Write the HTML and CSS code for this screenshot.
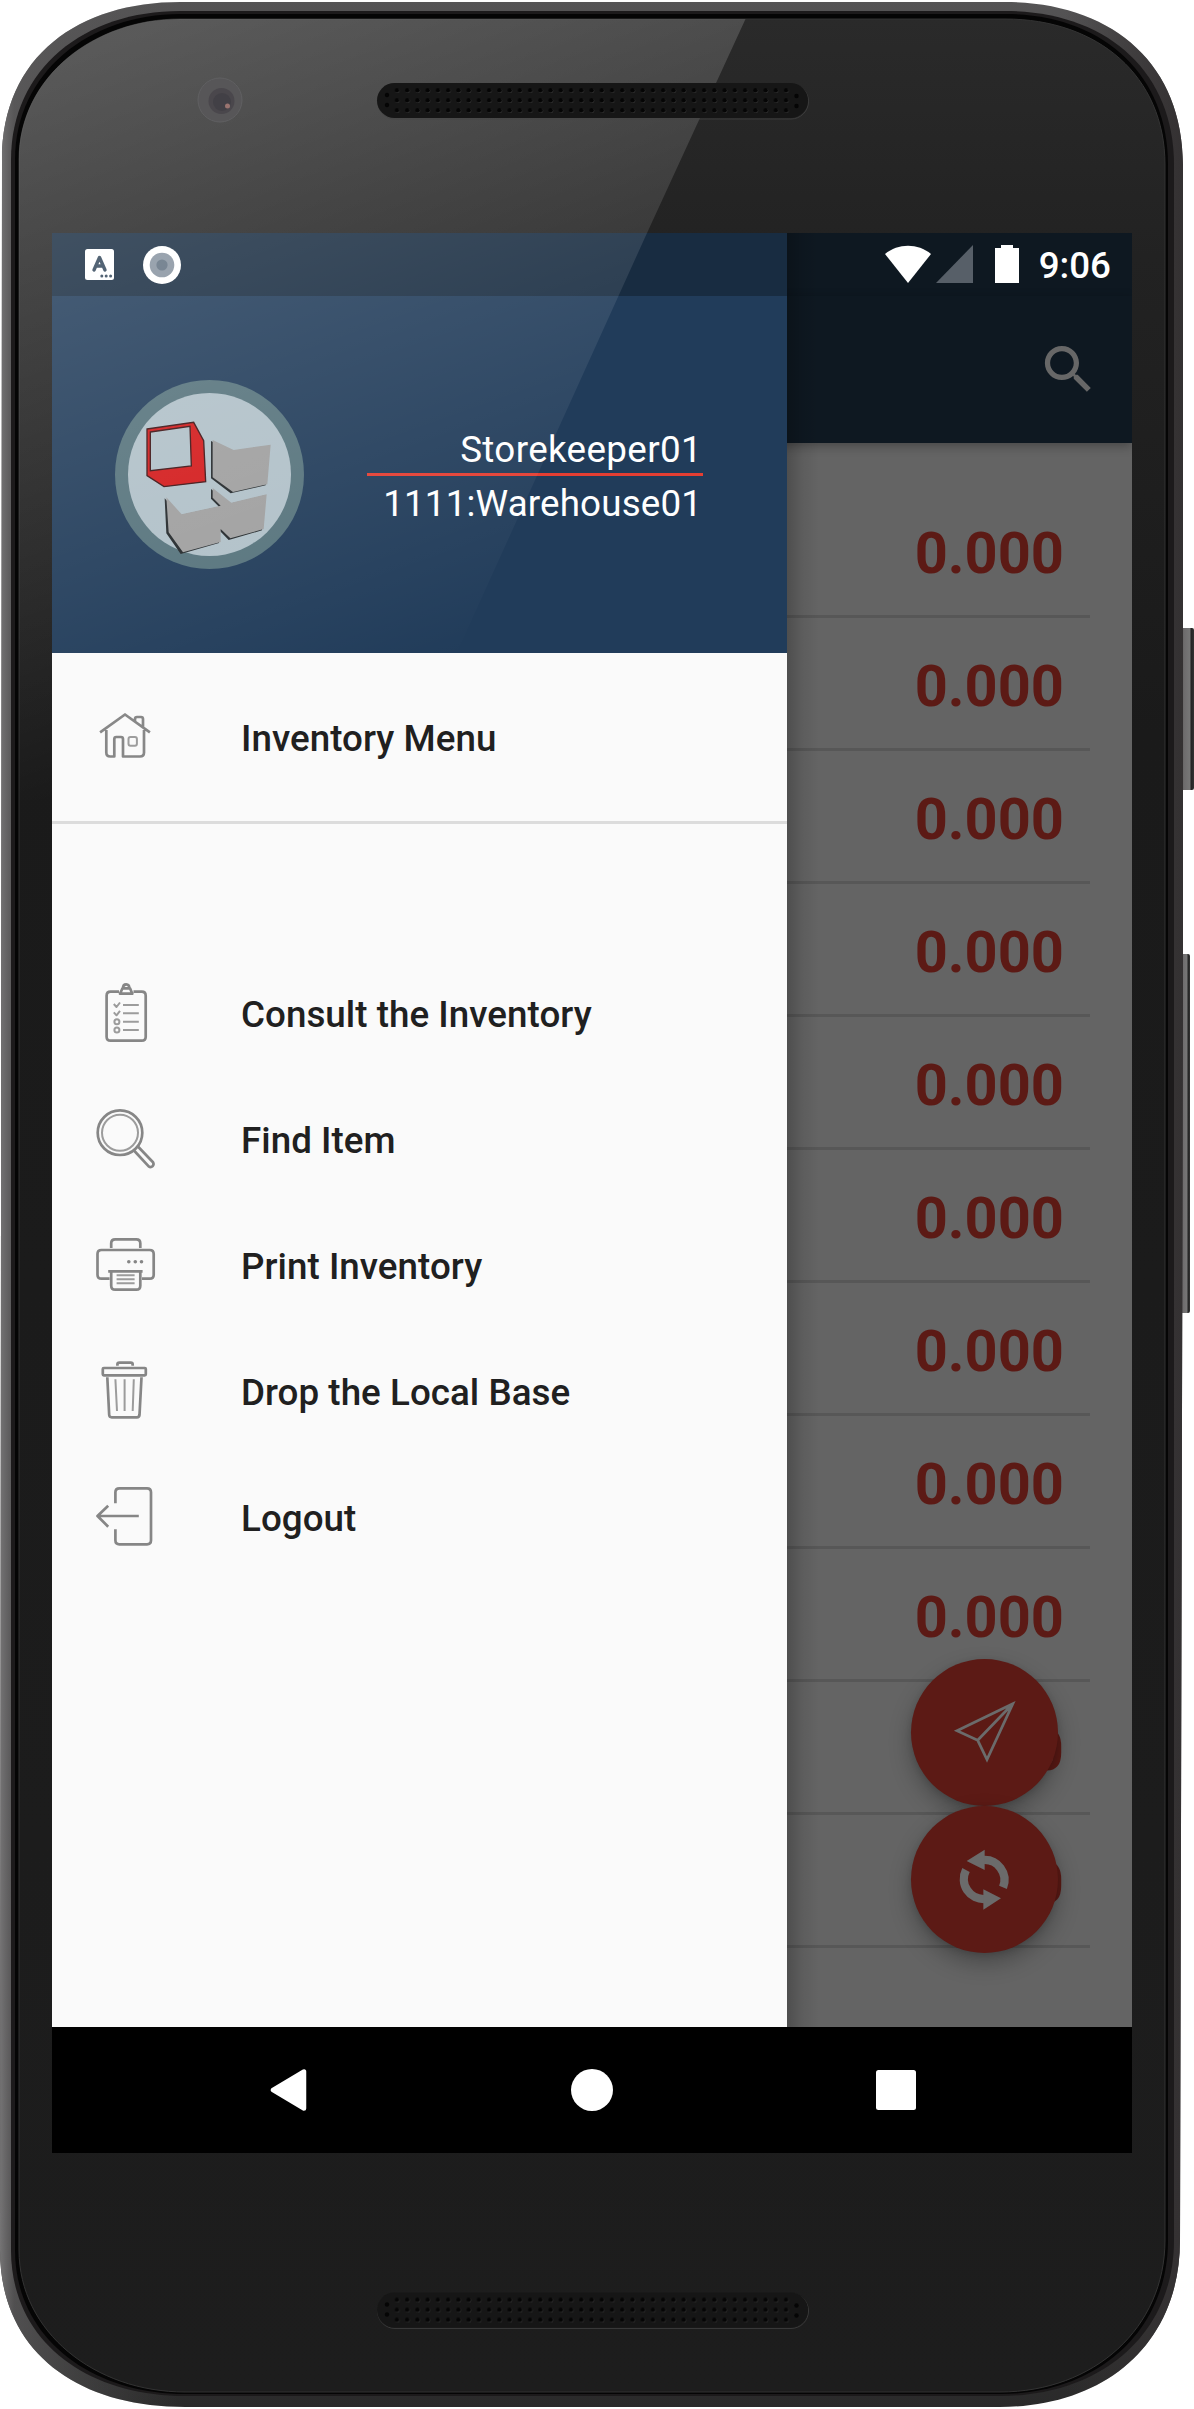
FILE: index.html
```html
<!DOCTYPE html>
<html lang="en">
<head>
<meta charset="utf-8">
<title>Inventory</title>
<link rel="stylesheet" href="styles.css">
</head>
<body>
<div class="device">
  <svg class="shell" viewBox="0 0 1194 2409" aria-hidden="true">
    <defs>
      <linearGradient id="frame" x1="0" y1="0" x2="0" y2="1">
        <stop offset="0" stop-color="#555455"/><stop offset=".06" stop-color="#464445"/>
        <stop offset=".9" stop-color="#3b393a"/><stop offset="1" stop-color="#2a2a2a"/>
      </linearGradient>
      <linearGradient id="edge" x1="0" y1="0" x2="1" y2="0">
        <stop offset="0" stop-color="#757475"/><stop offset=".012" stop-color="#5e5d5e" stop-opacity=".7"/>
        <stop offset=".15" stop-color="#555" stop-opacity="0"/><stop offset=".9" stop-color="#343132" stop-opacity="0"/>
        <stop offset="1" stop-color="#343132"/>
      </linearGradient>
      <linearGradient id="face" x1="0" y1="0" x2="0" y2="1">
        <stop offset="0" stop-color="#2a2a2a"/><stop offset=".1" stop-color="#222"/>
        <stop offset=".3" stop-color="#1a1a1a"/><stop offset="1" stop-color="#1d1d1d"/>
      </linearGradient>
      <linearGradient id="key" x1="0" y1="0" x2="1" y2="0">
        <stop offset="0" stop-color="#555"/><stop offset=".3" stop-color="#6e6c6d"/>
        <stop offset=".72" stop-color="#777"/><stop offset=".78" stop-color="#222"/><stop offset="1" stop-color="#333"/>
      </linearGradient>
      <pattern id="holes" x="391.9" y="85" width="10.24" height="10" patternUnits="userSpaceOnUse">
        <circle cx="5.6" cy="5.8" r="2.2" fill="#333"/><circle cx="5.1" cy="5.3" r="2.2" fill="#050505"/>
      </pattern>
    </defs>
    <rect x="1180" y="628" width="14" height="162" rx="2" fill="url(#key)"/>
    <rect x="1180" y="954" width="10" height="359" rx="2" fill="url(#key)"/>
    <path fill="url(#frame)" d="M180 2H1005C1110 2 1183 62 1183 165V1000L1180 2240C1180 2345 1104 2407 1000 2407H185C75 2407 0 2350 0 2250L2 160C2 55 80 2 180 2Z"/>
    <path fill="url(#edge)" d="M180 2H1005C1110 2 1183 62 1183 165V1000L1180 2240C1180 2345 1104 2407 1000 2407H185C75 2407 0 2350 0 2250L2 160C2 55 80 2 180 2Z"/>
    <path fill="#1c1a1b" d="M180 11H1005C1105 11 1174 70 1174 165V2240C1174 2335 1100 2396 1000 2396H185C85 2396 11 2340 11 2250V160C11 68 85 11 180 11Z"/>
    <path fill="#050505" d="M180 14H1005C1100 14 1168 72 1168 165V2240C1168 2332 1096 2394 1000 2394H185C90 2394 15 2337 15 2250V160C15 72 90 14 180 14Z"/>
    <path fill="url(#face)" stroke="#333" d="M180 19H1005C1098 19 1165 76 1165 165V2240C1165 2328 1094 2392 1000 2392H185C95 2392 19 2332 19 2250V160C19 76 95 19 180 19Z"/>
  </svg>

  <div class="screen">
    <main class="app">
      <div class="statusbar">
        <svg width="46" height="38" viewBox="0 0 46 38"><path d="M0 9C13-2 33-2 46 9L23 38Z" fill="#fff"/></svg>
        <svg class="signal" width="37" height="38" viewBox="0 0 37 38"><path d="M37 0V38H0Z" fill="#575f68"/></svg>
        <svg class="battery" width="24" height="38" viewBox="0 0 24 38"><path d="M6 0H18V3H24V38H0V3H6Z" fill="#fff"/></svg>
        <span class="clock">9:06</span>
      </div>
      <header class="appbar">
        <svg width="63" height="63" viewBox="0 0 24 24"><path fill="#676767" d="M15.5 14h-.79l-.28-.27C15.41 12.59 16 11.11 16 9.5 16 5.91 13.09 3 9.5 3S3 5.91 3 9.5 5.91 16 9.5 16c1.61 0 3.09-.59 4.23-1.57l.27.28v.79l5 4.99L20.49 19l-4.99-5zm-6 0C7.01 14 5 11.99 5 9.5S7.01 5 9.5 5 14 7.01 14 9.5 11.99 14 9.5 14z"/></svg>
      </header>
      <ul class="stock">
        <li>0.000</li><li>0.000</li><li>0.000</li><li>0.000</li><li>0.000</li><li>0.000</li>
        <li>0.000</li><li>0.000</li><li>0.000</li><li>0.000</li><li>0.000</li>
      </ul>
      <div class="fabs">
        <button class="fab" aria-label="Send">
          <svg width="147" height="147" viewBox="0 0 147 147"><path d="M101.800 44.800L46 71.700L66.700 81.300L76 100.500ZM101.800 44.800L66.700 81.300" fill="none" stroke="#6b6b6b" stroke-width="2.7"/></svg>
        </button>
        <button class="fab" aria-label="Refresh">
          <svg width="147" height="147" viewBox="393 738 441 441"><g fill="none" stroke="#6b6b6b" stroke-width="25"><path d="M608 900A60 60 0 0 1 669 982"/><path d="M616 1017A60 60 0 0 1 558 930"/></g><path d="M560 903L614 869V930ZM663 1015L610 988V1049Z" fill="#6b6b6b"/></svg>
        </button>
      </div>
    </main>

    <aside class="drawer">
      <div class="drawer-status">
        <svg width="29" height="31" viewBox="0 0 29 31"><rect width="29" height="31" rx="2.5" fill="#fff"/><path d="M9 21L14.5 8.5L20 21M11 17H18" fill="none" stroke="#33475b" stroke-width="3.4" stroke-linecap="round" stroke-linejoin="round"/><g fill="#33475b"><circle cx="16.8" cy="27" r="1.5"/><circle cx="21.2" cy="27" r="1.5"/><circle cx="25.6" cy="27" r="1.5"/></g></svg>
        <svg width="38" height="38" viewBox="0 0 38 38"><circle cx="19" cy="19" r="19" fill="#fff"/><circle cx="19" cy="19" r="12.3" fill="#8793a0"/><circle cx="19" cy="19" r="5.6" fill="#617181"/></svg>
      </div>
      <div class="profile">
        <svg class="avatar" width="189" height="189" viewBox="45 60 567 567">
          <circle cx="328.5" cy="343.5" r="283.5" fill="#56737c"/>
          <circle cx="328.5" cy="343.5" r="244.5" fill="#b0c0c8"/>
          <g fill="#22272a" transform="translate(-5 3)">
            <path d="M338 240L401 270L512 254L502 373L397 397L338 352Z"/>
            <path d="M338 384L394 428L500 403L491 508L391 537L362 507V546L247 579L204 517L199 412L245 463L362 437L338 413Z"/>
          </g>
          <g fill="#9f9f9f">
            <path d="M338 240L401 270L512 254L502 373L399 396L338 352Z"/>
            <path d="M338 384L394 428L500 403L491 507L391 535L362 507V546L249 577L206 517L199 412L245 463L362 437L338 413Z"/>
          </g>
          <path fill="#d31a1b" stroke="#3d1214" stroke-width="4" fill-rule="evenodd" d="M141 207L281 187L311 242L317 365L192 380L141 347ZM151 216L270 199L274 318L151 332Z"/>
        </svg>
        <div class="identity">
          <span class="user">Storekeeper01</span>
          <span class="site">1111:Warehouse01</span>
        </div>
      </div>
      <nav class="menu">
        <a class="item">
          <svg class="icon" viewBox="0 0 63 63"><path d="M6.1 26.3L31 8.5L55.9 26.3M41 15V13Q41 11 43 11H47Q49 11 49 13V20.5M12.3 24V46.5Q12.3 50.5 16.3 50.5H20.3V33Q20.3 31 22.3 31H27Q29 31 29 33V50.5H46Q50 50.5 50 46.5V24"/><rect class="thin" x="34.5" y="31" width="8.4" height="8.8" rx="2"/></svg>
          <span>Inventory Menu</span>
        </a>
        <div class="rule"></div>
        <a class="item">
          <svg class="icon" viewBox="0 0 63 63"><path d="M25 9.7H16.6Q12.6 9.7 12.6 13.7V54.7Q12.6 58.7 16.6 58.7H47.7Q51.7 58.7 51.7 54.7V13.7Q51.7 9.7 47.7 9.7H39.5M28.5 6.3H36L38.3 11.7H26ZM29 6.3Q29 2.3 32.2 2.3T35.3 6.3"/><path class="thin" d="M29 23H44.8M29 31.3H44.8M29 39.7H44.8M29 48H44.8M19.8 22L22.5 25L26 20.5M19.8 30.3L22.5 33.3L26 28.8"/><circle class="thin" cx="22.9" cy="39.7" r="2.5"/><circle class="thin" cx="22.9" cy="48" r="2.5"/></svg>
          <span>Consult the Inventory</span>
        </a>
        <a class="item">
          <svg class="icon" viewBox="0 0 63 63"><circle cx="26" cy="24.7" r="22.3"/><circle class="thin" cx="26" cy="24.7" r="18"/><path d="M43.2 37.8L59 54.2Q60.2 56.3 58.8 58Q56.8 59.8 54.7 58.4L39.5 42"/></svg>
          <span>Find Item</span>
        </a>
        <a class="item">
          <svg class="icon" viewBox="0 0 63 63"><path d="M17.2 14V9.3Q17.2 5.3 21.2 5.3H42.3Q46.3 5.3 46.3 9.3V14M15.5 44.7H7.5Q3.5 44.7 3.5 40.7V20Q3.5 16 7.5 16H55.7Q59.7 16 59.7 20V40.7Q59.7 44.7 55.7 44.7H48M14.2 37.3H48.6M17.2 37.3V51.7Q17.2 55.7 21.2 55.7H42.3Q46.3 55.7 46.3 51.7V37.3"/><path class="thin" d="M22.6 41.3H40.6M22.6 45.3H40.6M22.6 49.3H40.6"/><g class="dots"><circle cx="34.8" cy="27.7" r="1.8"/><circle cx="41.3" cy="27.7" r="1.8"/><circle cx="47.5" cy="27.7" r="1.8"/></g></svg>
          <span>Print Inventory</span>
        </a>
        <a class="item">
          <svg class="icon" viewBox="0 0 63 63"><rect x="8.8" y="8" width="43" height="7.3" rx="1"/><path d="M23.4 5.7V4.5Q23.4 2.7 25.4 2.7H36.7Q38.7 2.7 38.7 4.5V5.7M13.3 17.3L15.2 55Q15.4 57.3 17.7 57.3H43Q45.2 57.3 45.5 55L47.5 17.3"/><path class="thin" d="M21.4 19.3L23 51M30.6 19.3V51M39.8 19.3L38.7 51"/></svg>
          <span>Drop the Local Base</span>
        </a>
        <a class="item">
          <svg class="icon" viewBox="0 0 63 63"><path d="M21.4 17.3V6.3Q21.4 2.3 25.4 2.3H53Q57 2.3 57 6.3V54.3Q57 58.3 53 58.3H25.4Q21.4 58.3 21.4 54.3V43.3M44.8 30H3.5M14.2 19.7L3.5 30L14.2 40.7"/></svg>
          <span>Logout</span>
        </a>
      </nav>
    </aside>

    <footer class="navbar">
      <svg width="42" height="42" viewBox="0 0 42 42"><path d="M6 21L37 2.500V39.500Z" fill="#fff" stroke="#fff" stroke-width="4.500" stroke-linejoin="round"/></svg>
      <svg width="42" height="42" viewBox="0 0 42 42"><circle cx="21" cy="21" r="21" fill="#fff"/></svg>
      <svg width="40" height="40" viewBox="0 0 40 40"><rect width="40" height="40" rx="2.5" fill="#fff"/></svg>
    </footer>
  </div>

  <svg class="shell glass" viewBox="0 0 1194 2409" aria-hidden="true">
    <defs>
      <linearGradient id="glare" gradientUnits="userSpaceOnUse" x1="0" y1="0" x2="260" y2="728">
        <stop offset="0" stop-color="#fff" stop-opacity=".25"/><stop offset="1" stop-color="#fff" stop-opacity="0"/>
      </linearGradient>
    </defs>
    <path fill="url(#glare)" d="M180 19H745.5L647 233L390 800H19V160C19 76 95 19 180 19Z"/>
    <circle cx="220" cy="100" r="22" fill="#575658" stroke="#606062"/>
    <circle cx="221.5" cy="101" r="13" fill="#4a474c"/>
    <circle cx="222" cy="102" r="9" fill="#424046"/>
    <circle cx="227.5" cy="106" r="2.5" fill="#9a7470"/>
    <g id="speaker">
      <rect x="377.5" y="84" width="431" height="35" rx="17.5" fill="none" stroke="#444" stroke-opacity=".7"/>
      <rect x="377" y="83" width="431" height="35" rx="17.5" fill="#161616"/>
      <rect x="391.9" y="85" width="399.4" height="30" fill="url(#holes)"/>
      <g fill="#050505"><circle cx="387" cy="95" r="2.2"/><circle cx="387" cy="105" r="2.2"/><circle cx="796.5" cy="96" r="2.2"/><circle cx="796.5" cy="106" r="2.2"/></g>
    </g>
    <use href="#speaker" y="2209.5"/>
  </svg>
</div>
</body>
</html>
```
FILE: styles.css
```css
* { box-sizing: border-box; }
body { margin: 0; background: #fff; font-family: Roboto, sans-serif; }
svg { display: block; flex: none; }

.device { position: relative; width: 1194px; height: 2409px; padding: 233px 62px 256px 52px; overflow: hidden; }
.shell { position: absolute; inset: 0; width: 1194px; height: 2409px; }
.glass { pointer-events: none; }

/* 1080 x 1920 display: app and drawer share one grid row, the system bar sits below */
.screen { position: relative; display: grid; grid-template: 1794px 126px / 735px 345px; background: #000; }
.app { grid-area: 1 / 1 / 2 / 3; display: flex; flex-direction: column; background: #646464; position: relative; isolation: isolate; overflow: hidden; }
.drawer { grid-area: 1 / 1 / 2 / 2; position: relative; background: #fafafa; }
.drawer::after { content: ""; position: absolute; left: 100%; top: 0; width: 32px; height: 100%; background: linear-gradient(90deg, rgba(0,0,0,.22), rgba(0,0,0,.07) 50%, transparent); }

.statusbar { display: flex; justify-content: flex-end; flex: none; height: 63px; padding: 12px 21px 0 0; background: #0e1821; }
.signal { margin-left: 5px; }
.battery { margin-left: 22px; }
.clock { margin: -1px 0 0 20px; color: #fff; font-size: 36.75px; font-weight: 500; line-height: 43px; }
.appbar { display: flex; justify-content: flex-end; align-items: center; height: 147px; padding-right: 32px; background: #0e1821; box-shadow: 0 3px 10px rgba(0,0,0,.3); flex: none; z-index: 1; }

.stock { list-style: none; margin: 0; padding: 42px 42px 0; }
.stock li { height: 133px; padding: 7px 26px 0 0; border-bottom: 3px solid #575757; color: #5c1a15; font-size: 57.75px; font-weight: 700; line-height: 123px; text-align: right; }

.fabs { position: absolute; right: 74px; bottom: 74px; }
.fab { display: block; width: 147px; height: 147px; padding: 0; border: 0; border-radius: 50%; background: #5c1a15; box-shadow: 0 10px 22px rgba(0,0,0,.28), 0 2px 6px rgba(0,0,0,.12); }

.drawer-status { display: flex; align-items: center; gap: 29px; height: 63px; padding-left: 33px; background: #182c41; }
.profile { display: flex; justify-content: space-between; height: 357px; padding: 84px 84px 0 63px; background: #213c5a; }
.identity { display: flex; flex-direction: column; width: 336px; padding-top: 48px; color: #fff; font-size: 36.75px; line-height: 43px; text-align: right; }
.user { box-sizing: content-box; height: 45px; padding-right: 1px; border-bottom: 3px solid #e53e32; letter-spacing: .36px; }
.site { padding: 6px 1px 0 0; letter-spacing: .15px; }

.menu { padding-top: 21px; }
.item { display: flex; align-items: center; gap: 84px; height: 126px; padding-left: 42px; color: #202020; font-size: 36.75px; font-weight: 500; line-height: 43px; letter-spacing: .04px; }
.item span { padding-top: 2px; }
.rule { height: 3px; margin: 21px 0 126px; background: #dcdcdc; }
.icon { width: 63px; height: 63px; fill: none; stroke: #868686; stroke-width: 2.7; stroke-linejoin: round; }
.icon .thin { stroke: #9c9c9c; stroke-width: 2; }
.icon .dots { fill: #868686; stroke: none; }

.navbar { grid-area: 2 / 1 / 3 / 3; display: grid; grid-template-columns: repeat(3, 304px); justify-content: center; justify-items: center; align-items: center; }
```
